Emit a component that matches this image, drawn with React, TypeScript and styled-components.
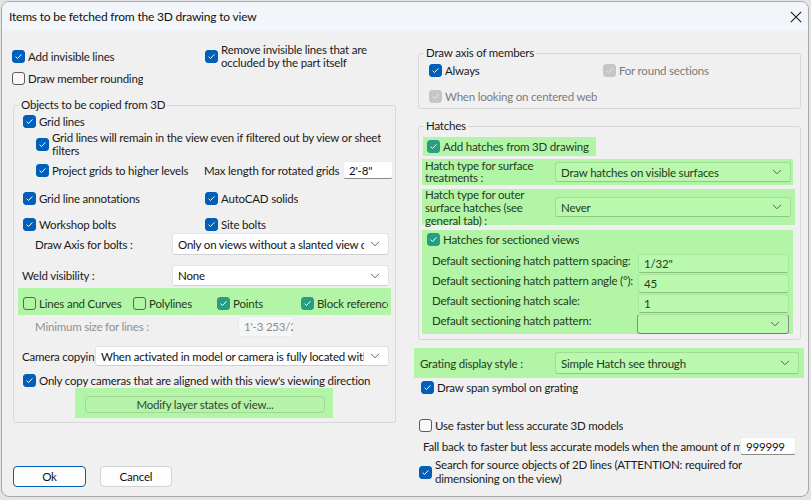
import React, { ReactNode } from 'react';
import styled, { createGlobalStyle } from 'styled-components';

const GREEN = '#b3f5a7';
const GREEN_FIELD = '#b9f8ad';
const BLUE = '#005fb8';

const GlobalStyle = createGlobalStyle`
  html, body {
    margin: 0;
    padding: 0;
    background: #e4e4e4;
  }
  body {
    font-family: Lato, "Noto Sans", "Liberation Sans", sans-serif;
    font-size: 11.5px;
    letter-spacing: -0.2px;
    color: #1a1a1a;
  }
  * {
    box-sizing: border-box;
  }
`;

const Page = styled.div`
  width: 811px;
  height: 500px;
  padding: 1px 0 0 1px;
  overflow: hidden;
`;

const Dialog = styled.div`
  width: 808px;
  height: 496px;
  background: #f0f0f0;
  border: 1px solid #a8a8a8;
  border-radius: 8px;
  overflow: hidden;
  display: flex;
  flex-direction: column;
`;

const TitleBar = styled.div`
  height: 29px;
  flex: 0 0 29px;
  background: #f2f5fa;
  display: flex;
  align-items: center;
  justify-content: space-between;
  padding: 0 6px 0 7px;
`;

const Title = styled.div`
  font-size: 12px;
  color: #111;
`;

const Body = styled.div`
  flex: 1;
  display: flex;
`;

const LeftCol = styled.div`
  width: 403px;
  padding: 11px 0 0 10px;
  display: flex;
  flex-direction: column;
`;

const RightCol = styled.div`
  flex: 1;
  padding: 0 0 0 13px;
  display: flex;
  flex-direction: column;
`;

const Row = styled.div<{ $h?: number; $mt?: number; $ml?: number; $align?: string }>`
  display: flex;
  align-items: ${(p) => p.$align || 'center'};
  height: ${(p) => (p.$h ? `${p.$h}px` : 'auto')};
  margin-top: ${(p) => p.$mt || 0}px;
  margin-left: ${(p) => p.$ml || 0}px;
  flex: 0 0 auto;
`;

const Group = styled.fieldset<{ $w: number; $ml?: number; $mt: number; $pl: number; $pb: number }>`
  width: ${(p) => p.$w}px;
  margin: ${(p) => p.$mt}px 0 0 ${(p) => p.$ml || 0}px;
  padding: 0 4px ${(p) => p.$pb}px ${(p) => p.$pl}px;
  border: 1px solid #d8d8d8;
  border-radius: 3px;
  min-width: 0;
  display: flex;
  flex-direction: column;
  flex: 0 0 auto;
`;

const Legend = styled.legend<{ $ml: number }>`
  padding: 0 2px;
  margin-left: ${(p) => p.$ml}px;
  line-height: 16px;
  font-size: 11.5px;
  color: #1a1a1a;
`;

const Box = styled.span<{ $state: 'on' | 'off' | 'disabled'; $tint?: boolean }>`
  width: 13px;
  height: 13px;
  flex: 0 0 13px;
  border-radius: 3px;
  display: inline-flex;
  align-items: center;
  justify-content: center;
  background: ${(p) =>
    p.$state === 'on' ? (p.$tint ? '#2a9c84' : BLUE) : p.$state === 'disabled' ? '#c6c6c6' : p.$tint ? 'transparent' : '#f8f8f8'};
  border: 1px solid
    ${(p) =>
      p.$state === 'on' ? (p.$tint ? '#2a9c84' : BLUE) : p.$state === 'disabled' ? '#c6c6c6' : p.$tint ? '#4c6e48' : '#5c5c5c'};
`;

const Item = styled.div<{ $w?: number; $indent?: number }>`
  display: flex;
  align-items: center;
  gap: 3px;
  width: ${(p) => (p.$w ? `${p.$w}px` : 'auto')};
  padding-left: ${(p) => p.$indent || 0}px;
  flex: 0 0 auto;
  overflow: hidden;
`;

const ItemText = styled.span<{ $muted?: boolean; $tint?: boolean; $lh?: number }>`
  white-space: nowrap;
  line-height: ${(p) => p.$lh || 13}px;
  color: ${(p) => (p.$muted ? '#7b7b7b' : p.$tint ? '#233b22' : '#1a1a1a')};
`;

const Label = styled.div<{ $w: number; $pl?: number; $muted?: boolean; $tint?: boolean; $lh?: number }>`
  width: ${(p) => p.$w}px;
  flex: 0 0 ${(p) => p.$w}px;
  padding-left: ${(p) => p.$pl || 0}px;
  white-space: nowrap;
  overflow: hidden;
  line-height: ${(p) => p.$lh || 13}px;
  color: ${(p) => (p.$muted ? '#8f8f8f' : p.$tint ? '#233b22' : '#1a1a1a')};
`;

const SelectBox = styled.div<{ $w: number; $h: number; $tint?: boolean; $focus?: boolean }>`
  width: ${(p) => p.$w}px;
  height: ${(p) => p.$h}px;
  flex: 0 0 ${(p) => p.$w}px;
  display: flex;
  align-items: center;
  gap: 6px;
  padding: 0 8px 0 5px;
  background: ${(p) => (p.$tint ? GREEN_FIELD : '#ffffff')};
  border: 1px solid ${(p) => (p.$focus ? '#8a8a8a' : p.$tint ? '#9fdc94' : '#e2e2e2')};
  border-top-color: ${(p) => (p.$focus ? '#a9dca0' : p.$tint ? '#9fdc94' : '#e2e2e2')};
  border-bottom-color: ${(p) => (p.$focus ? '#7a7a7a' : p.$tint ? '#8fc985' : '#cfcfcf')};
  border-radius: 3px;
`;

const SelectText = styled.span<{ $tint?: boolean }>`
  flex: 1;
  overflow: hidden;
  white-space: nowrap;
  color: ${(p) => (p.$tint ? '#233b22' : '#111')};
`;

const Field = styled.div<{ $w: number; $h: number; $tint?: boolean; $disabled?: boolean }>`
  width: ${(p) => p.$w}px;
  height: ${(p) => p.$h}px;
  flex: 0 0 ${(p) => p.$w}px;
  display: flex;
  align-items: center;
  padding: 0 5px;
  white-space: nowrap;
  overflow: hidden;
  background: ${(p) => (p.$disabled ? '#f6f6f6' : p.$tint ? GREEN_FIELD : '#ffffff')};
  border: 1px solid ${(p) => (p.$disabled ? '#ebebeb' : p.$tint ? '#a9e69e' : '#ececec')};
  border-bottom-color: ${(p) => (p.$disabled ? '#ebebeb' : p.$tint ? '#86bf7c' : '#8a8a8a')};
  border-radius: 3px;
  color: ${(p) => (p.$disabled ? '#8d8d8d' : p.$tint ? '#233b22' : '#111')};
`;

const Band = styled.div<{ $w?: number; $h: number; $mt: number; $ml?: number; $pl?: number; $pt?: number; $col?: boolean }>`
  background: ${GREEN};
  width: ${(p) => (p.$w ? `${p.$w}px` : 'auto')};
  height: ${(p) => p.$h}px;
  margin-top: ${(p) => p.$mt}px;
  margin-left: ${(p) => p.$ml || 0}px;
  padding-left: ${(p) => p.$pl || 0}px;
  padding-top: ${(p) => p.$pt || 0}px;
  display: flex;
  flex-direction: ${(p) => (p.$col ? 'column' : 'row')};
  align-items: ${(p) => (p.$col ? 'stretch' : 'center')};
  align-self: flex-start;
  flex: 0 0 auto;
`;

const LayerButton = styled.div`
  width: 240px;
  height: 17px;
  margin: 8px 0 0 10px;
  border: 1px solid #9ed893;
  border-radius: 4px;
  background: #b6f2aa;
  display: flex;
  align-items: center;
  justify-content: center;
  color: #2e4b2c;
`;

const ButtonRow = styled.div`
  display: flex;
  gap: 14px;
  margin: 43px 0 0 1px;
`;

const Button = styled.div<{ $primary?: boolean; $w: number }>`
  width: ${(p) => p.$w}px;
  height: 21px;
  display: flex;
  align-items: center;
  justify-content: center;
  background: #fdfdfd;
  border: 1px solid ${(p) => (p.$primary ? BLUE : '#d2d2d2')};
  border-radius: 4px;
  color: #111;
`;

const SectionRows = styled.div`
  display: flex;
  flex-direction: column;
  margin-top: 7px;
`;

const HatchRow = styled.div`
  display: flex;
  align-items: flex-start;
  height: 20px;
`;

const Chevron = ({ tint }: { tint?: boolean }) => (
  <svg width="10" height="6" viewBox="0 0 10 6">
    <path d="M1 0.8 L5 4.8 L9 0.8" fill="none" stroke={tint ? '#4d6a48' : '#606060'} strokeWidth="1" />
  </svg>
);

const CloseIcon = () => (
  <svg width="12" height="12" viewBox="0 0 12 12">
    <path d="M0.8 0.8 L11.2 11.2 M11.2 0.8 L0.8 11.2" stroke="#1a1a1a" strokeWidth="1.1" />
  </svg>
);

type CheckProps = {
  state?: 'on' | 'off' | 'disabled';
  tint?: boolean;
  w?: number;
  indent?: number;
  lh?: number;
  children: ReactNode;
};

const Check = ({ state = 'on', tint, w, indent, lh, children }: CheckProps) => (
  <Item $w={w} $indent={indent}>
    <Box $state={state} $tint={tint}>
      {state !== 'off' && (
        <svg width="9" height="9" viewBox="0 0 9 9">
          <path
            d="M1.6 4.7 L3.5 6.5 L7.4 2.4"
            fill="none"
            stroke={state === 'disabled' ? '#eeeeee' : '#ffffff'}
            strokeWidth="1"
          />
        </svg>
      )}
    </Box>
    <ItemText $muted={state === 'disabled'} $tint={tint} $lh={lh}>
      {children}
    </ItemText>
  </Item>
);

const Select = ({ value, w, h, tint }: { value: string; w: number; h: number; tint?: boolean }) => (
  <SelectBox $w={w} $h={h} $tint={tint}>
    <SelectText $tint={tint}>{value}</SelectText>
    <Chevron tint={tint} />
  </SelectBox>
);

const hatchRows = [
  { label: 'Default sectioning hatch pattern spacing:', value: '1/32"' },
  { label: 'Default sectioning hatch pattern angle (°):', value: '45' },
  { label: 'Default sectioning hatch scale:', value: '1' }
];

const App = () => {
  return (
    <Page>
      <GlobalStyle />
      <Dialog>
        <TitleBar>
          <Title>Items to be fetched from the 3D drawing to view</Title>
          <CloseIcon />
        </TitleBar>
        <Body>
          <LeftCol>
            <Row $h={28}>
              <Check w={193}>Add invisible lines</Check>
              <Check>
                Remove invisible lines that are
                <br />
                occluded by the part itself
              </Check>
            </Row>
            <Row $h={16}>
              <Check state="off">Draw member rounding</Check>
            </Row>

            <Group $w={383} $ml={1} $mt={11} $pl={9} $pb={4}>
              <Legend $ml={-4}>Objects to be copied from 3D</Legend>
              <Row $h={16}>
                <Check>Grid lines</Check>
              </Row>
              <Row $mt={2} $h={26}>
                <Check indent={13}>
                  Grid lines will remain in the view even if filtered out by view or sheet
                  <br />
                  filters
                </Check>
              </Row>
              <Row $mt={3} $h={20}>
                <Check w={181} indent={13}>
                  Project grids to higher levels
                </Check>
                <Label $w={139}>Max length for rotated grids</Label>
                <Field $w={50} $h={18}>
                  2'-8"
                </Field>
              </Row>
              <Row $mt={10} $h={16}>
                <Check w={182}>Grid line annotations</Check>
                <Check>AutoCAD solids</Check>
              </Row>
              <Row $mt={10} $h={16}>
                <Check w={182}>Workshop bolts</Check>
                <Check>Site bolts</Check>
              </Row>
              <Row $mt={1} $h={22}>
                <Label $w={149} $pl={12}>
                  Draw Axis for bolts :
                </Label>
                <Select w={217} h={22} value="Only on views without a slanted view direction" />
              </Row>
              <Row $mt={10} $h={21} $ml={-1}>
                <Label $w={150}>Weld visibility :</Label>
                <Select w={217} h={21} value="None" />
              </Row>
              <Band $w={373} $h={27} $mt={2} $ml={-5} $pl={5} $pt={4}>
                <Check state="off" tint w={110}>
                  Lines and Curves
                </Check>
                <Check state="off" tint w={84}>
                  Polylines
                </Check>
                <Check tint w={84}>
                  Points
                </Check>
                <Check tint w={87}>
                  Block references
                </Check>
              </Band>
              <Row $mt={1} $h={21}>
                <Label $w={215} $pl={12} $muted>
                  Minimum size for lines :
                </Label>
                <Field $w={56} $h={21} $disabled>
                  1'-3 253/256"
                </Field>
              </Row>
              <Row $mt={9} $h={20} $ml={-1}>
                <Label $w={73}>Camera copying :</Label>
                <Select w={294} h={20} value="When activated in model or camera is fully located within view" />
              </Row>
              <Row $mt={6} $h={16}>
                <Check>Only copy cameras that are aligned with this view's viewing direction</Check>
              </Row>
              <Band $w={258} $h={30} $mt={0} $ml={52} $col>
                <LayerButton>Modify layer states of view...</LayerButton>
              </Band>
            </Group>

            <ButtonRow>
              <Button $primary $w={73}>
                Ok
              </Button>
              <Button $w={72}>Cancel</Button>
            </ButtonRow>
          </LeftCol>

          <RightCol>
            <Group $w={383} $mt={14} $pl={10} $pb={4}>
              <Legend $ml={-5}>Draw axis of members</Legend>
              <Row $mt={1} $h={16}>
                <Check w={174}>Always</Check>
                <Check state="disabled">For round sections</Check>
              </Row>
              <Row $mt={10} $h={16}>
                <Check state="disabled">When looking on centered web</Check>
              </Row>
            </Group>

            <Group $w={383} $mt={9} $pl={3} $pb={5}>
              <Legend $ml={2}>Hatches</Legend>
              <Band $h={19} $mt={3} $ml={1} $pl={4}>
                <Check tint>Add hatches from 3D drawing</Check>
                <Item $w={7} />
              </Band>
              <Band $w={371} $h={26} $mt={3}>
                <Label $w={133} $pl={3} $tint $lh={12}>
                  Hatch type for surface
                  <br />
                  treatments :
                </Label>
                <Select tint w={236} h={20} value="Draw hatches on visible surfaces" />
              </Band>
              <Band $w={373} $h={36} $mt={4}>
                <Label $w={133} $pl={3} $tint $lh={13}>
                  Hatch type for outer
                  <br />
                  surface hatches (see
                  <br />
                  general tab) :
                </Label>
                <Select tint w={236} h={20} value="Never" />
              </Band>
              <Band $w={371} $h={104} $mt={5} $col>
                <Row $mt={1} $h={16} $ml={5}>
                  <Check tint>Hatches for sectioned views</Check>
                </Row>
                <SectionRows>
                  {hatchRows.map((r) => (
                    <HatchRow key={r.label}>
                      <Label $w={216} $pl={10} $tint>
                        {r.label}
                      </Label>
                      <Field $tint $w={151} $h={19}>
                        {r.value}
                      </Field>
                    </HatchRow>
                  ))}
                  <HatchRow>
                    <Label $w={215} $pl={10} $tint>
                      Default sectioning hatch pattern:
                    </Label>
                    <SelectBox $w={152} $h={20} $tint $focus>
                      <SelectText $tint />
                      <Chevron tint />
                    </SelectBox>
                  </HatchRow>
                </SectionRows>
              </Band>
            </Group>

            <Band $w={390} $h={30} $mt={8} $ml={-4} $pl={6}>
              <Label $w={135} $tint>
                Grating display style :
              </Label>
              <Select tint w={244} h={22} value="Simple Hatch see through" />
            </Band>
            <Row $mt={1} $h={16} $ml={3}>
              <Check>Draw span symbol on grating</Check>
            </Row>
            <Row $mt={22} $h={16} $ml={1}>
              <Check state="off">Use faster but less accurate 3D models</Check>
            </Row>
            <Row $mt={3} $h={20} $ml={5}>
              <Label $w={317}>Fall back to faster but less accurate models when the amount of members exceeds</Label>
              <Field $w={56} $h={18}>
                999999
              </Field>
            </Row>
            <Row $mt={2} $h={28} $ml={1}>
              <Check lh={14}>
                Search for source objects of 2D lines (ATTENTION: required for
                <br />
                dimensioning on the view)
              </Check>
            </Row>
          </RightCol>
        </Body>
      </Dialog>
    </Page>
  );
};

export default App;
